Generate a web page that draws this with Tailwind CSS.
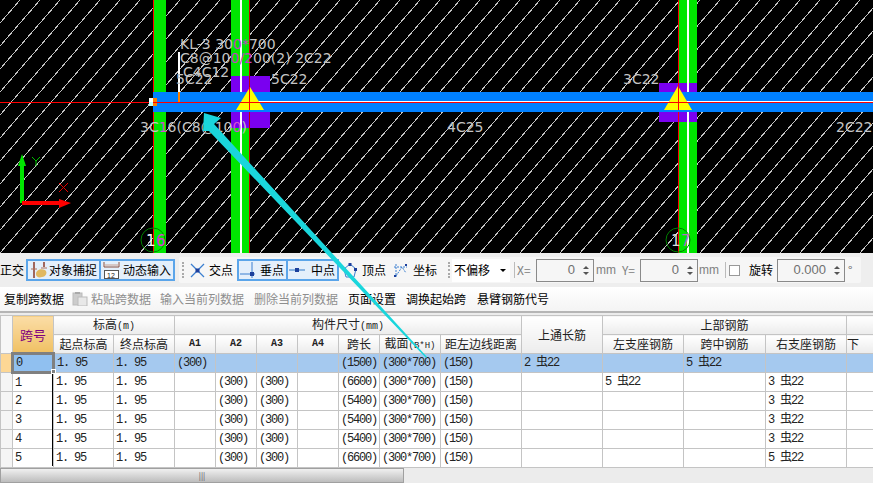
<!DOCTYPE html>
<html lang="zh">
<head>
  <meta charset="UTF-8">
  <title>梁平法表格</title>
  <script src="https://cdn.jsdelivr.net/npm/@tailwindcss/browser@4"></script>
</head>
<body class="relative w-[873px] h-[483px] overflow-hidden bg-[#ececec] font-['Noto_Sans_CJK_SC',sans-serif] text-[12px] text-black">
  <!-- cad canvas -->
  <svg class="block w-[873px] h-[253px] bg-black" viewBox="0 0 873 253" font-family="DejaVu Sans, sans-serif" font-size="14" fill="#c4c4c4">
    <g id="hatch" stroke="#c4c4c4" shape-rendering="crispEdges"></g>
    <rect x="153" y="0" width="13" height="253" fill="#00e600"/>
    <rect x="153" y="0" width="1" height="253" fill="#ff0000"/>
    <rect x="231" y="76" width="39" height="52" fill="#7a00f0"/>
    <rect x="659" y="83" width="38" height="39" fill="#7a00f0"/>
    <rect x="231" y="0" width="19" height="76" fill="#00e600"/>
    <rect x="231" y="128" width="19" height="125" fill="#00e600"/>
    <rect x="240" y="0" width="2" height="253" fill="#fff"/>
    <rect x="249" y="0" width="1" height="253" fill="#c00000"/>
    <rect x="678" y="0" width="19" height="83" fill="#00e600"/>
    <rect x="678" y="122" width="19" height="131" fill="#00e600"/>
    <rect x="687" y="0" width="2" height="253" fill="#fff"/>
    <rect x="678" y="0" width="1" height="253" fill="#ff0000"/>
    <rect x="153" y="92" width="720" height="20" fill="#0080ff"/>
    <rect x="178" y="52" width="2" height="40" fill="#fff"/>
    <rect x="178" y="92" width="2" height="10" fill="#ff8000"/>
    <rect x="257" y="101" width="616" height="1" fill="#fff"/>
    <polygon points="250,87 264,110 236,110" fill="#ffff00"/>
    <polygon points="678,86 692,110 664,110" fill="#ffff00"/>
    <rect x="0" y="102" width="873" height="1" fill="#ff0000"/>
    <rect x="249" y="87" width="1" height="23" fill="#ff0000"/>
    <rect x="678" y="86" width="1" height="24" fill="#ff0000"/>
    <rect x="149" y="98" width="4" height="4" fill="#fff"/>
    <rect x="149" y="102" width="4" height="4" fill="#bff"/>
    <rect x="153" y="98" width="4" height="8" fill="#ff8000"/>
    <rect x="153" y="102" width="4" height="1" fill="#ff0000"/>
    <text x="180" y="49">KL-3 30<tspan fill="#c040c0">0*</tspan>700</text>
    <text x="180" y="63">C8@10<tspan fill="#c040c0">0/2</tspan>00(2) 2C22</text>
    <text x="183" y="77">C4C12</text>
    <text x="176" y="84">5C22</text>
    <text x="271" y="84">5C22</text>
    <text x="140" y="132">3C<tspan fill="#d050d0">1</tspan>6(C8@10<tspan fill="#d050d0">0</tspan>)</text>
    <text x="623" y="84">3C22</text>
    <text x="447" y="132">4C25</text>
    <text x="836" y="132">2C22</text>
    <circle cx="153" cy="240" r="12" fill="none" stroke="#008000"/>
    <text x="146" y="246" font-size="15" fill="#fff">1</text>
    <text x="156" y="246" font-size="15" fill="#e030e0">6</text>
    <circle cx="678" cy="240" r="12" fill="none" stroke="#008000"/>
    <text x="671" y="246" font-size="15" fill="#ddd">1</text>
    <text x="681" y="246" font-size="15" fill="#b070c0">7</text>
    <!-- axes -->
    <rect x="20" y="162" width="4" height="41" fill="#00e600"/>
    <polygon points="22,154 26,166 18,166" fill="#00e600"/>
    <rect x="22" y="201" width="40" height="4" fill="#ff0000"/>
    <polygon points="71,203 59,199 59,208" fill="#ff0000"/>
    <path d="M32 157L36 161L40 157M36 161V166" stroke="#00c000" fill="none"/>
    <path d="M59 183L68 192M68 183L59 192" stroke="#e00000" fill="none"/>
  </svg>

  <!-- snap toolbar -->
  <div class="flex items-center h-[34px] bg-[#eeeeee] whitespace-nowrap">
    <span class="w-[26px]">正交</span>
    <div class="flex items-center gap-[3px] w-[75px] h-[22px] pl-[3px] border-2 border-[#5ba5ea] bg-[#e4effb]">
      <svg width="17" height="18" viewBox="0 0 17 18"><path d="M3 1V17M13 1V6" stroke="#8b3a2a" stroke-width="1.500"/><path d="M0 8H6M10 7H16" stroke="#b0705a"/><path d="M5 13C5 9 10 7 14 9C17 11 15 16 11 16C8 17 5 16 5 13Z" fill="#e0b860"/></svg>
      <span class="-ml-[2px]">对象捕捉</span>
    </div>
    <div class="flex items-center gap-[3px] w-[74px] h-[22px] pl-[2px] border-2 border-l-0 border-[#5ba5ea] bg-[#e4effb]">
      <svg width="17" height="17" viewBox="0 0 17 17"><path d="M1 0V5H16V0" fill="none" stroke="#8a5040"/><path d="M1 3H16" stroke="#c9a090"/><rect x="1.500" y="8.500" width="14" height="8" fill="#fff" stroke="#555"/><text x="4" y="15.500" font-size="7" font-family="Liberation Sans" fill="#222">12</text></svg>
      <span>动态输入</span>
    </div>
    <div class="flex items-center ml-[4px] pl-[3px] pr-[9px] h-[26px] rounded-[2px] bg-[#f6f6f6]">
      <div class="mr-[6px] w-[2px] h-[16px] border-l-2 border-dotted border-[#aaa]"></div>
      <svg class="mr-[4px]" width="15" height="15" viewBox="0 0 15 15"><path d="M1 1L14 14M14 1L1 14" stroke="#3b7fd0" stroke-width="1.300"/><rect x="5.500" y="5.500" width="4" height="4" fill="#1c3f9c"/></svg>
      <span class="w-[28px]">交点</span>
      <div class="flex items-center gap-[4px] w-[51px] h-[22px] pl-[1px] border-2 border-[#5ba5ea] bg-[#e4effb]">
        <svg width="16" height="16" viewBox="0 0 16 16"><path d="M0 12H15M12 0V16" stroke="#3b7fd0"/><rect x="10" y="10" width="4" height="4" fill="#1c3f9c"/></svg>
        <span>垂点</span>
      </div>
      <div class="flex items-center gap-[6px] w-[51px] h-[22px] pl-[1px] border-2 border-l-0 border-[#5ba5ea] bg-[#e4effb]">
        <svg width="16" height="6" viewBox="0 0 16 6"><path d="M0 3H16" stroke="#6a9fd8" stroke-width="1.500"/><rect x="6" y="1" width="4" height="4" fill="#1c3f9c"/></svg>
        <span>中点</span>
      </div>
      <svg class="ml-[4px] mr-[5px]" width="14" height="15" viewBox="0 0 14 15"><path d="M7 1L13 6L11 14H3L1 6Z" fill="none" stroke="#3b7fd0"/><rect x="5.500" y="0" width="3" height="3" fill="#1c3f9c"/><rect x="0" y="5" width="3" height="3" fill="#1c3f9c"/><rect x="11" y="5" width="3" height="3" fill="#1c3f9c"/></svg>
      <span class="w-[31px]">顶点</span>
      <svg class="mr-[5px]" width="15" height="15" viewBox="0 0 15 15"><path d="M1 4H14M3 1V14M3 13L9 4L13 10" fill="none" stroke="#3b7fd0" stroke-dasharray="2 1"/><rect x="12" y="1" width="2" height="2" fill="#1c3f9c"/><rect x="1" y="12" width="2" height="2" fill="#1c3f9c"/></svg>
      <span class="w-[35px]">坐标</span>
      <div class="w-[2px] h-[16px] border-l-2 border-dotted border-[#aaa]"></div>
      <div class="flex items-center ml-[2px] w-[58px] h-[23px] pl-[2px] bg-white">
        <span>不偏移</span>
        <span class="ml-[10px] border-x-[3px] border-t-[3px] border-x-transparent border-t-black"></span>
      </div>
      <div class="ml-[4px] mr-[2px] w-px h-[16px] bg-[#bbb]"></div>
      <span class="w-[19px] text-[#808080]">X=</span>
      <div class="flex items-center justify-end w-[58px] h-[23px] pr-[4px] gap-[5px] border border-[#8a8a8a] text-[#707070] text-[13px] font-['Liberation_Sans',sans-serif]">
        <span>0</span>
        <span class="flex flex-col gap-[3px] ml-[3px]"><i class="border-x-[3px] border-b-[3px] border-x-transparent border-b-[#555]"></i><i class="border-x-[3px] border-t-[3px] border-x-transparent border-t-[#555]"></i></span>
      </div>
      <span class="ml-[2px] w-[26px] text-[#808080] font-['Liberation_Sans',sans-serif]">mm</span>
      <span class="w-[18px] text-[#808080]">Y=</span>
      <div class="flex items-center justify-end w-[58px] h-[23px] pr-[4px] gap-[5px] border border-[#8a8a8a] text-[#707070] text-[13px] font-['Liberation_Sans',sans-serif]">
        <span>0</span>
        <span class="flex flex-col gap-[3px] ml-[3px]"><i class="border-x-[3px] border-b-[3px] border-x-transparent border-b-[#555]"></i><i class="border-x-[3px] border-t-[3px] border-x-transparent border-t-[#555]"></i></span>
      </div>
      <span class="ml-[1px] w-[26px] text-[#808080] font-['Liberation_Sans',sans-serif]">mm</span>
      <div class="w-px h-[16px] bg-[#bbb] mr-[3px]"></div>
      <div class="w-[11px] h-[11px] border border-[#999] bg-white mr-[9px]"></div>
      <span class="w-[28px]">旋转</span>
      <div class="flex items-center justify-end w-[68px] h-[23px] pr-[4px] gap-[5px] border border-[#8a8a8a] text-[#707070] text-[13px] font-['Liberation_Sans',sans-serif]">
        <span>0.000</span>
        <span class="flex flex-col gap-[3px] ml-[3px]"><i class="border-x-[3px] border-b-[3px] border-x-transparent border-b-[#555]"></i><i class="border-x-[3px] border-t-[3px] border-x-transparent border-t-[#555]"></i></span>
      </div>
      <span class="ml-[3px] text-[#666]">°</span>
    </div>
  </div>

  <!-- table actions -->
  <div class="flex items-center h-[26px] pl-[4px] bg-gradient-to-b from-white to-[#f4f4f4] border-b-2 border-[#b5b5b5] whitespace-nowrap">
    <span class="w-[68px]">复制跨数据</span>
    <svg class="mr-[3px]" width="16" height="14" viewBox="0 0 16 14"><rect x="1" y="1" width="9" height="12" fill="#ccc" stroke="#bbb"/><rect x="3" y="0" width="5" height="2" fill="#aaa"/><rect x="6" y="5" width="9" height="9" fill="#e8e8e8" stroke="#bbb"/></svg>
    <span class="w-[69px] text-[#8e8e8e]">粘贴跨数据</span>
    <span class="w-[94px] text-[#8e8e8e]">输入当前列数据</span>
    <span class="w-[94px] text-[#8e8e8e]">删除当前列数据</span>
    <span class="w-[58px]">页面设置</span>
    <span class="w-[71px]">调换起始跨</span>
    <span>悬臂钢筋代号</span>
  </div>

  <!-- span table -->
  <div class="relative w-[873px] h-[170px] overflow-hidden pt-[2px]">
    <table class="table-fixed border-collapse w-[927px] bg-white text-[#222] [&_td]:h-[19px] [&_td]:p-0 [&_td]:pl-[2px] [&_td]:border [&_td]:border-[#c4c4c4] [&_td]:whitespace-nowrap [&_td]:overflow-hidden [&_td]:leading-none [&_td]:font-['Liberation_Mono','Noto_Sans_CJK_SC',monospace] [&_td]:text-[12px] [&_td]:tracking-[-1.2px] [&_th]:h-[19px] [&_th]:p-0 [&_th]:leading-none [&_th]:border [&_th]:border-[#c4c4c4] [&_th]:font-normal [&_th]:bg-gradient-to-b [&_th]:from-white [&_th]:to-[#ececec] [&_th]:whitespace-nowrap [&_th]:overflow-hidden">
      <colgroup>
        <col class="w-[12px]"><col class="w-[41px]"><col class="w-[60px]"><col class="w-[61px]"><col class="w-[41px]"><col class="w-[41px]"><col class="w-[41px]"><col class="w-[41px]"><col class="w-[41px]"><col class="w-[61px]"><col class="w-[81px]"><col class="w-[81px]"><col class="w-[81px]"><col class="w-[82px]"><col class="w-[81px]"><col class="w-[81px]">
      </colgroup>
      <thead>
        <tr>
          <th rowspan="2" class="!bg-none !bg-[#f7f7f7]"></th>
          <th rowspan="2" class="!from-[#fbdda6] !to-[#f0c163] !text-[#800080] text-[13px]">跨号</th>
          <th colspan="2">标高<span class="font-['Liberation_Mono',monospace] text-[10px]">(m)</span></th>
          <th colspan="7">构件尺寸<span class="font-['Liberation_Mono',monospace] text-[10px]">(mm)</span></th>
          <th rowspan="2">上通长筋</th>
          <th colspan="3">上部钢筋</th>
          <th></th>
        </tr>
        <tr>
          <th>起点标高</th><th>终点标高</th>
          <th class="font-['Liberation_Mono',monospace] text-[10px] !font-bold">A1</th>
          <th class="font-['Liberation_Mono',monospace] text-[10px] !font-bold">A2</th>
          <th class="font-['Liberation_Mono',monospace] text-[10px] !font-bold">A3</th>
          <th class="font-['Liberation_Mono',monospace] text-[10px] !font-bold">A4</th>
          <th>跨长</th>
          <th>截面<span class="font-['Liberation_Mono',monospace] text-[9px]">(B*H)</span></th>
          <th>距左边线距离</th><th>左支座钢筋</th><th>跨中钢筋</th><th>右支座钢筋</th>
          <th class="text-left pl-[18px]">下</th>
        </tr>
      </thead>
      <tbody>
        <tr class="bg-[#a5c9ef]">
          <td class="!bg-[#fdd795]"></td><td class="!border-[3px] !border-[#808080] bg-[#90c0f0]">0</td><td>1. 95</td><td>1. 95</td><td>(300)</td><td></td><td></td><td></td><td>(1500)</td><td>(300*700)</td><td>(150)</td><td>2 虫22</td><td></td><td>5 虫22</td><td></td><td></td>
        </tr>
        <tr>
          <td class="bg-[#f5f5f5]"></td><td>1</td><td>1. 95</td><td>1. 95</td><td></td><td>(300)</td><td>(300)</td><td></td><td>(6600)</td><td>(300*700)</td><td>(150)</td><td></td><td>5 虫22</td><td></td><td>3 虫22</td><td></td>
        </tr>
        <tr>
          <td class="bg-[#f5f5f5]"></td><td>2</td><td>1. 95</td><td>1. 95</td><td></td><td>(300)</td><td>(300)</td><td></td><td>(5400)</td><td>(300*700)</td><td>(150)</td><td></td><td></td><td></td><td>3 虫22</td><td></td>
        </tr>
        <tr>
          <td class="bg-[#f5f5f5]"></td><td>3</td><td>1. 95</td><td>1. 95</td><td></td><td>(300)</td><td>(300)</td><td></td><td>(5400)</td><td>(300*700)</td><td>(150)</td><td></td><td></td><td></td><td>3 虫22</td><td></td>
        </tr>
        <tr>
          <td class="bg-[#f5f5f5]"></td><td>4</td><td>1. 95</td><td>1. 95</td><td></td><td>(300)</td><td>(300)</td><td></td><td>(5400)</td><td>(300*700)</td><td>(150)</td><td></td><td></td><td></td><td>3 虫22</td><td></td>
        </tr>
        <tr>
          <td class="bg-[#f5f5f5]"></td><td>5</td><td>1. 95</td><td>1. 95</td><td></td><td>(300)</td><td>(300)</td><td></td><td>(6600)</td><td>(300*700)</td><td>(150)</td><td></td><td></td><td></td><td>5 虫22</td><td></td>
        </tr>
      </tbody>
    </table>
    <!-- frozen column edge -->
    <div class="absolute left-[52px] top-[58px] h-[95px] w-px bg-black"></div>
    <div class="absolute left-[51px] top-[56px] w-[5px] h-[5px] bg-[#808080] border border-white"></div>
    <!-- horizontal scrollbar -->
    <div class="absolute left-0 bottom-0 flex items-center justify-center w-[404px] h-[15px] bg-gradient-to-b from-[#f0f0f0] to-[#bdbdbd] border border-[#a0a0a0] text-[8px] text-[#555] leading-none">|||</div>
  </div>

  <!-- callout arrow lying over the page -->
  <svg class="absolute left-0 top-0 pointer-events-none" width="873" height="483" viewBox="0 0 873 483">
    <polygon points="204,113 221,118 214,124 427,357 426,358 209,131 203,131" fill="#1ad6dc"/>
  </svg>

  <script>
    // drawing hatch, one aliased diagonal every 20px
    const hatch = document.getElementById('hatch');
    for (let x = -220; x < 873; x += 20) {
      const line = document.createElementNS('http://www.w3.org/2000/svg', 'line');
      line.setAttribute('x1', x);
      line.setAttribute('y1', 253);
      line.setAttribute('x2', x + 220);
      line.setAttribute('y2', 0);
      hatch.appendChild(line);
    }
  </script>
</body>
</html>
